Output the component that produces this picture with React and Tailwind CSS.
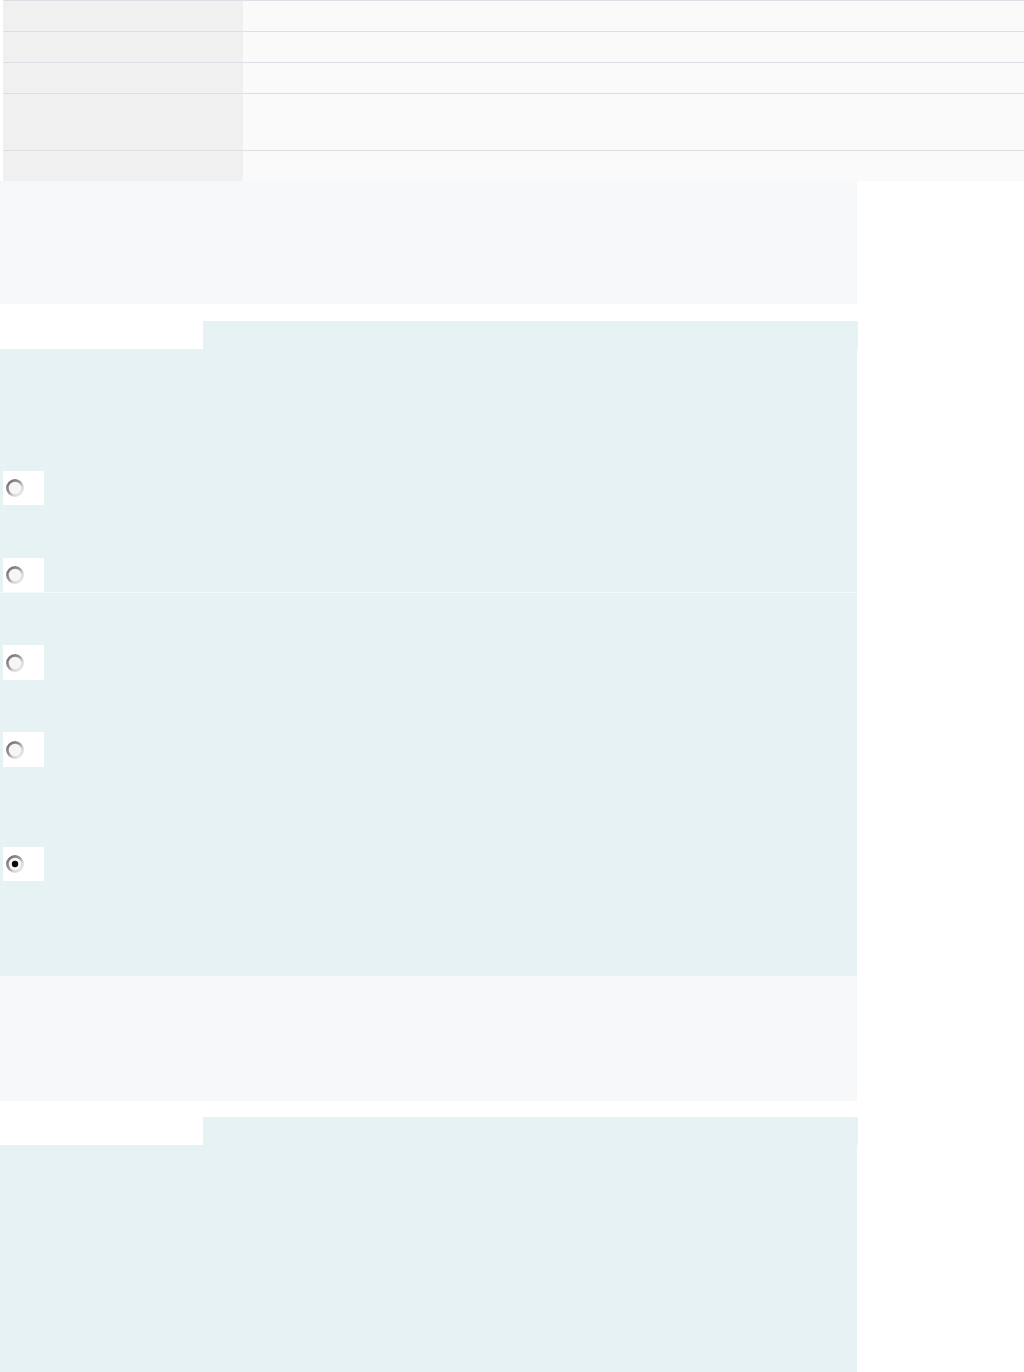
import React from 'react';

function Radio({ checked, tall }) {
  const id = checked ? 'rg1' : 'rg0';
  return (
    <div className={`w-[41px] ${tall ? 'h-[35px]' : 'h-[34px]'} bg-white ml-[3px] flex items-center pl-[2px]`}>
      <svg width="20" height="20" viewBox="0 0 20 20">
        <defs>
          <linearGradient id={id} x1="0" y1="0" x2="1" y2="1">
            <stop offset="0" stopColor="#6a6a6a" />
            <stop offset="0.45" stopColor="#9a9a9a" />
            <stop offset="0.7" stopColor="#d8d8d8" />
            <stop offset="1" stopColor="#ececec" />
          </linearGradient>
        </defs>
        <circle cx="10" cy="10" r="7.6" fill="#f6f6f6" stroke={`url(#${id})`} strokeWidth="2.6" />
        {checked && <circle cx="10" cy="10" r="3.2" fill="#0a0a0a" />}
      </svg>
    </div>
  );
}

function InfoTable() {
  const rows = [31, 31, 31, 57, 31];
  return (
    <div className="ml-[3px] border-t border-[#dedee6]">
      {rows.map((h, i) => (
        <div
          key={i}
          className={`flex ${i < rows.length - 1 ? 'border-b border-[#dedee6]' : ''}`}
          style={{ height: i < rows.length - 1 ? h : h - 1 }}
        >
          <div className="w-[240px] bg-[#f0f0f0]" />
          <div className="flex-1 bg-[#fafafa]" />
        </div>
      ))}
    </div>
  );
}

function Tab() {
  return (
    <div className="flex h-[28px] w-[858px]">
      <div className="w-[203px] bg-white" />
      <div className="flex-1 bg-[#e6f2f4]" />
    </div>
  );
}

export default function App() {
  return (
    <div className="min-h-[1372px] bg-white font-['Liberation_Sans',sans-serif]">
      <InfoTable />
      <div className="w-[857px] h-[123px] bg-[#f7f8fa]" />
      <div className="h-[17px]" />
      <Tab />
      <div className="w-[857px] h-[627px] bg-[#e6f2f4] flex flex-col">
        <div className="h-[122px]" />
        <Radio />
        <div className="h-[53px]" />
        <Radio />
        <div className="h-px bg-[#f4fafb]" />
        <div className="h-[52px]" />
        <Radio tall />
        <div className="h-[52px]" />
        <Radio tall />
        <div className="h-[80px]" />
        <Radio checked />
      </div>
      <div className="w-[857px] h-[125px] bg-[#f7f8fa]" />
      <div className="h-[16px]" />
      <Tab />
      <div className="w-[857px] h-[227px] bg-[#e6f2f4]" />
    </div>
  );
}
